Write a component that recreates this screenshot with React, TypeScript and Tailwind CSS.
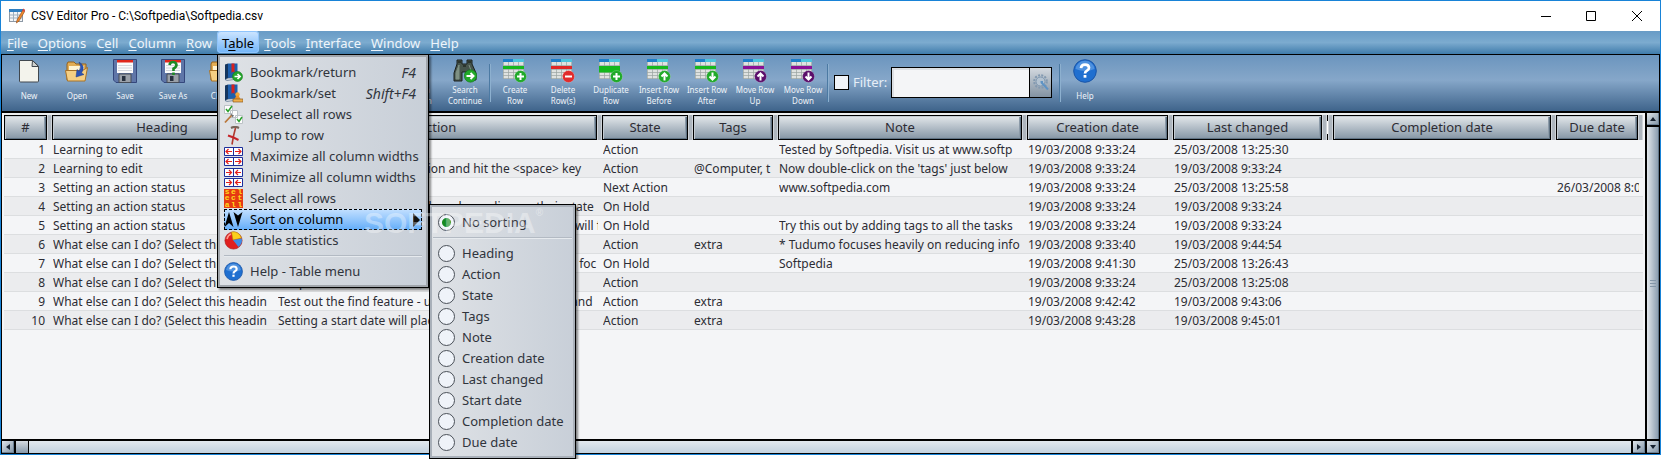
import type { ReactNode } from "react";
import clsx from "clsx";

type Row = {
  heading: string;
  action: string;
  state: string;
  tags: string;
  note: string;
  created: string;
  changed: string;
  due?: string;
};

const selectHeading = "What else can I do? (Select this headin";

const rows: Row[] = [
  { heading: "Learning to edit", action: "Double-click here", state: "Action", tags: "", note: "Tested by Softpedia. Visit us at www.softp", created: "19/03/2008 9:33:24", changed: "25/03/2008 13:25:30" },
  { heading: "Learning to edit", action: "Select the cell with a selection and hit the <space> key", state: "Action", tags: "@Computer, t", note: "Now double-click on the 'tags' just below", created: "19/03/2008 9:33:24", changed: "19/03/2008 9:33:24" },
  { heading: "Setting an action status", action: "Click the state", state: "Next Action", tags: "", note: "www.softpedia.com", created: "19/03/2008 9:33:24", changed: "25/03/2008 13:25:58", due: "26/03/2008 8:0" },
  { heading: "Setting an action status", action: "Action icons will change colour depending on their state", state: "On Hold", tags: "", note: "", created: "19/03/2008 9:33:24", changed: "19/03/2008 9:33:24" },
  { heading: "Setting an action status", action: "Completed actions are hidden from the list, the view will fi", state: "On Hold", tags: "", note: "Try this out by adding tags to all the tasks", created: "19/03/2008 9:33:24", changed: "19/03/2008 9:33:24" },
  { heading: selectHeading, action: "Tag your actions", state: "Action", tags: "extra", note: "* Tudumo focuses heavily on reducing info", created: "19/03/2008 9:33:40", changed: "19/03/2008 9:44:54" },
  { heading: selectHeading, action: "Use the headings on the left of the list to keep things foc", state: "On Hold", tags: "", note: "Softpedia", created: "19/03/2008 9:41:30", changed: "25/03/2008 13:26:43" },
  { heading: selectHeading, action: "Keep notes", state: "Action", tags: "", note: "", created: "19/03/2008 9:33:24", changed: "25/03/2008 13:25:08" },
  { heading: selectHeading, action: "Test out the find feature - use your keyboard to find and", state: "Action", tags: "extra", note: "", created: "19/03/2008 9:42:42", changed: "19/03/2008 9:43:06" },
  { heading: selectHeading, action: "Setting a start date will place it out of the view until t", state: "Action", tags: "extra", note: "", created: "19/03/2008 9:43:28", changed: "19/03/2008 9:45:01" },
];

const columns = [
  { label: "#", width: "w-[48px]" },
  { label: "Heading", width: "w-[225px]" },
  { label: "Action", width: "w-[325px]" },
  { label: "State", width: "w-[91px]" },
  { label: "Tags", width: "w-[85px]" },
  { label: "Note", width: "w-[249px]" },
  { label: "Creation date", width: "w-[146px]" },
  { label: "Last changed", width: "w-[154px]" },
  { label: "", width: "w-[6px]" },
  { label: "Completion date", width: "w-[223px]" },
  { label: "Due date", width: "w-auto" },
];

const menus = [
  { before: "", key: "F", after: "ile" },
  { before: "", key: "O", after: "ptions" },
  { before: "C", key: "e", after: "ll" },
  { before: "", key: "C", after: "olumn" },
  { before: "", key: "R", after: "ow" },
  { before: "T", key: "a", after: "ble" },
  { before: "", key: "T", after: "ools" },
  { before: "", key: "I", after: "nterface" },
  { before: "", key: "W", after: "indow" },
  { before: "", key: "H", after: "elp" },
];

const sortFields = ["Heading", "Action", "State", "Tags", "Note", "Creation date", "Last changed", "Start date", "Completion date", "Due date"];

/* ---------- icons ---------- */

const AppIcon = () => (
  <svg width="16" height="16" viewBox="0 0 16 16" aria-hidden="true">
    <rect x="0.5" y="1.5" width="13" height="12" fill="#f4f6f8" stroke="#8d99a6" />
    <rect x="0" y="1" width="14" height="3" fill="#2f7fc1" />
    <path d="M1 7h12M1 10h12M4.500 4v9M8.500 4v9" stroke="#9fb0bf" fill="none" />
    <path d="M14.500 1 8 12l-.6 3 2.400-1.700L16 3z" fill="#f08a2c" stroke="#8c4a1a" strokeWidth=".6" />
    <path d="m13.300 2.400 1.900 1.500L16 2l-1.500-1.500z" fill="#d64545" />
  </svg>
);

const NewIcon = () => (
  <svg width="24" height="24" viewBox="0 0 24 24" aria-hidden="true">
    <path d="M2.500 1.500h13l6 5.500v15q0 1-1 1h-17q-1 0-1-1z" fill="#f3f3ec" stroke="#40474e" />
    <path d="M15.500 1.500 15 7.500h6.500z" fill="#cfd2cf" stroke="#40474e" strokeLinejoin="round" />
  </svg>
);

const OpenIcon = () => (
  <svg width="24" height="24" viewBox="0 0 24 24" aria-hidden="true">
    <path d="M2 21V5l1-2h6l2 2h10v6" fill="#e2ad55" stroke="#96631c" />
    <path d="M4 7h15v5H4z" fill="#fff4d4" />
    <path d="M.5 11.500h17l5-3-2.500 13.500H2.500z" fill="#f5cf83" stroke="#a87226" />
    <path d="M14 3q7 4 2.500 11l2.500 1.500-8 2.500 1-7.500 2 1.800Q17 8 14 3z" fill="#2b53b4" stroke="#1c3a86" strokeWidth=".5" />
  </svg>
);

const SaveIcon = ({ ask }: { ask?: boolean }) => (
  <svg width="24" height="24" viewBox="0 0 24 24" aria-hidden="true">
    <path d="M.5.500h23v23H3l-2.500-2.500z" fill="#5f76a8" stroke="#34477c" />
    <path d="M4 1h16v13H4z" fill="#fbfbfb" />
    <path d="M4 1h16v2.500H4z" fill="#e0261b" />
    <path d="M5 6.500h14M5 9h14M5 11.500h14" stroke="#c9cdd4" strokeWidth=".8" />
    <path d="M6 15h12v8.500H6z" fill="#9aa0a8" stroke="#464c57" />
    <path d="M9 17h3.500v5H9z" fill="#27303f" />
    {ask && <path d="M8.500 6q.5-3 3.500-3t3.500 3q0 2-3 3.600V12m0 1.500V16" fill="none" stroke="#1c8a24" strokeWidth="2.600" />}
  </svg>
);

const BinocularsIcon = () => (
  <svg width="24" height="24" viewBox="0 0 24 24" aria-hidden="true">
    <path d="M4 1h5v4h5V1h5v4l4 9v7h-8v-8H9v9H1v-8l3-9z" fill="#46544c" stroke="#1b211e" />
    <path d="M3 14l3-8v14H3zM16 6l3 8" fill="#7f9184" stroke="#7f9184" />
    <path d="M5 3h3M15 3h3M10 7h3" stroke="#10140f" />
    <circle cx="17.500" cy="17" r="6.200" fill="#21a92a" stroke="#0e7616" strokeWidth=".6" />
    <path d="M13.500 17h7m-3-3 3 3-3 3" fill="none" stroke="#fff" strokeWidth="2" />
  </svg>
);

type RowIconProps = { bar: string; badge: string; mark: string; double?: boolean };

const RowIcon = ({ bar, badge, mark, double }: RowIconProps) => (
  <svg width="24" height="24" viewBox="0 0 24 24" aria-hidden="true">
    <path d="M0 0h21v20H0z" fill="#dfe2e0" />
    <path d="M.5 3v17M5.500 3v17M10.500 3v17M15.500 3v17M20.500 3v17M0 6.500h21M0 10.500h21M0 13.500h21M0 16.500h21M0 19.500h21" stroke="#9aa3a1" strokeWidth=".7" fill="none" />
    <path d="M0 0h21v3H0z" fill="#1d7ec8" />
    <path d="M10 0h11v3H10z" fill="#4cc3dc" />
    <path d="M0 7h21v3H0z" fill={bar} />
    {double && <path d="M0 10h21v3.500H0z" fill={bar} />}
    <circle cx="17.500" cy="17.500" r="6" fill={badge} stroke="#ffffff" strokeOpacity=".35" strokeWidth=".6" />
    <path d={mark} fill="none" stroke="#fff" strokeWidth="2" />
  </svg>
);

const HelpIcon = ({ size }: { size: number }) => (
  <svg width={size} height={size} viewBox="0 0 24 24" aria-hidden="true">
    <circle cx="12" cy="12" r="11.300" fill="#1f6fd0" stroke="#1a55a8" />
    <path d="M2.500 10a9.600 9.600 0 0 1 19 0q-9 4-19 0z" fill="#6ea8ea" opacity=".6" />
    <path d="M8 9.200q.2-3.500 4-3.500t4 3q0 1.700-2 2.900-2 1.200-2 2.900" fill="none" stroke="#fff" strokeWidth="2.700" />
    <path d="M10.600 16h2.800v2.700h-2.800z" fill="#fff" />
  </svg>
);

const GearIcon = () => (
  <svg width="16" height="17" viewBox="0 0 16 17" aria-hidden="true">
    <circle cx="7.500" cy="7.500" r="6.300" fill="none" stroke="#8299b0" strokeWidth="2" strokeDasharray="2 1.300" />
    <circle cx="7.500" cy="7.500" r="4.500" fill="#b4c3d1" stroke="#7e97b0" />
    <path d="m8 8 7 7.500" stroke="#5f93c4" strokeWidth="2" />
    <path d="M7 7h3v3z" fill="#5f93c4" />
  </svg>
);

const BookIcon = ({ kind }: { kind: "return" | "set" }) => (
  <svg width="19" height="19" viewBox="0 0 19 19" aria-hidden="true">
    <path d="M1 1.500 4 .500v15l-3 1z" fill="#15365f" />
    <path d="M4 .500h9.500v14.500L4 16z" fill="#1d5fae" />
    <path d="M1 16.500 4 15l9.500-.5v1.500L3 17.500z" fill="#d9dde2" stroke="#27496f" strokeWidth=".5" />
    <path d="M7.500.500h3v9.500L9 8.500 7.500 10z" fill="#d8201c" />
    {kind === "return" ? (
      <>
        <circle cx="13.500" cy="13.500" r="5" fill="#23a62c" stroke="#157a1c" strokeWidth=".6" />
        <path d="M10.500 13.500h5.500M13.500 11l2.600 2.500-2.600 2.500" fill="none" stroke="#fff" strokeWidth="1.700" />
      </>
    ) : (
      <>
        <circle cx="13.500" cy="10.500" r="2.200" fill="#f3a73a" />
        <path d="m10.500 15 2-3.500h2l2 3.500z" fill="#e8912a" />
        <path d="M9 15h10v3H9z" fill="#f0b04c" stroke="#8a5a24" strokeWidth=".7" />
      </>
    )}
  </svg>
);

const DeselectIcon = () => (
  <svg width="19" height="19" viewBox="0 0 19 19" aria-hidden="true">
    <path d="M.5.500h8v8h-8zM6.500 5.500h7v7h-7zM11.500 10.500h7v8h-7z" fill="#fdfdfd" stroke="#bcc2c6" />
    <path d="m2 4 2 2.500L8 1M13 14l2 2.500L18 12" fill="none" stroke="#28a02c" strokeWidth="1.500" />
    <path d="m1 17.500 7-7.500" stroke="#b9773a" strokeWidth="1.800" />
    <path d="m6.500 8.500 3.500 2-1.500 2z" fill="#6c7074" />
  </svg>
);

const JumpIcon = () => (
  <svg width="19" height="19" viewBox="0 0 19 19" aria-hidden="true">
    <path d="M7 2q4-2 8 0" fill="none" stroke="#77655a" strokeWidth="2.200" />
    <path d="M11.500 2 9.500 10 8 18.500" fill="none" stroke="#b03a30" strokeWidth="1.600" />
    <path d="m4 9.500 5.500 2 5 2.500" fill="none" stroke="#c5252a" strokeWidth="2" />
  </svg>
);

const WidthIcon = ({ inward }: { inward?: boolean }) => {
  const left = inward ? "M2 4.500h5M5 2l2.500 2.500L5 7" : "M2 4.500h6M4.500 2 2 4.500 4.500 7";
  const right = inward ? "M12 4.500h5M14 2l-2.500 2.500L14 7" : "M11 4.500h6M14.500 2 17 4.500 14.500 7";
  return (
    <svg width="19" height="19" viewBox="0 0 19 19" aria-hidden="true">
      {[0, 10].map((y) => (
        <g key={y} transform={`translate(0 ${y})`} fill="none">
          <path d="M.5.500h18v8H.5z" fill="#fff" stroke="#1d2f9b" />
          <path d="M9.500 0v8" stroke="#1d2f9b" />
          <path d={left} stroke="#e3201c" strokeWidth="1.200" />
          <path d={right} stroke="#e3201c" strokeWidth="1.200" />
        </g>
      ))}
    </svg>
  );
};

const SelectAllIcon = () => (
  <span className="grid h-[19px] w-[19px] grid-cols-3 grid-rows-3 place-items-center bg-[#e63a12] font-['Liberation_Mono',monospace] text-[8px] leading-[6px] font-bold text-[#ffd91f]" aria-hidden="true">
    {"selectall".split("").map((letter, index) => (
      <span key={index}>{letter}</span>
    ))}
  </span>
);

const SortIcon = () => (
  <svg width="19" height="15" viewBox="0 0 19 15" aria-hidden="true">
    <path d="M5 0 9.500 15 5 11 .5 15zM9.500 0 14 3.500 18.500 0 14 15z" fill="#000" />
  </svg>
);

const PieIcon = () => (
  <svg width="19" height="19" viewBox="0 0 19 19" aria-hidden="true">
    <circle cx="9.500" cy="9.500" r="8.600" fill="#e02020" stroke="#a21414" strokeWidth=".6" />
    <path d="M9 9 7.500 1a8.600 8.600 0 0 1 10 6z" fill="#fbcf1d" stroke="#b98e0a" strokeWidth=".5" />
    <path d="m9 9 8.800-1.500q1 5-3.300 8.500z" fill="#3f8ee6" />
    <path d="M3 8q1-4 4-5" stroke="#ff9a8a" strokeWidth="1.500" fill="none" />
  </svg>
);

/* ---------- menus ---------- */

const tableMenu: { label: string; icon: ReactNode; shortcut?: string }[] = [
  { label: "Bookmark/return", icon: <BookIcon kind="return" />, shortcut: "F4" },
  { label: "Bookmark/set", icon: <BookIcon kind="set" />, shortcut: "Shift+F4" },
  { label: "Deselect all rows", icon: <DeselectIcon /> },
  { label: "Jump to row", icon: <JumpIcon /> },
  { label: "Maximize all column widths", icon: <WidthIcon /> },
  { label: "Minimize all column widths", icon: <WidthIcon inward /> },
  { label: "Select all rows", icon: <SelectAllIcon /> },
  { label: "Sort on column", icon: <SortIcon /> },
  { label: "Table statistics", icon: <PieIcon /> },
];

const panel = "absolute border border-black bg-linear-to-r from-[#dfe2e6] to-[#c8cfd8] text-[#30343c] shadow-[2px_2px_2px_rgba(0,0,0,0.45)]";

const Separator = () => <div className="h-[2px] border-t border-[#b3bac3] bg-[#e6eaee]" />;

const SortOption = ({ label, checked }: { label: string; checked?: boolean }) => (
  <label className="flex h-[21px] items-center gap-[7px] pl-[5px]">
    <input
      type="radio"
      name="sort"
      defaultChecked={checked}
      className="h-[17px] w-[17px] appearance-none rounded-full border border-[#4a5058] bg-[#eff3f9] checked:bg-[radial-gradient(circle,#178a20_4px,#eff3f9_5px)]"
    />
    {label}
  </label>
);

const SortMenu = () => (
  <div className={clsx(panel, "top-[149px] left-[211px] w-[147px]")}>
    <div className="border-2 border-[#a9b0b9] px-px pt-[5px] pb-[3px]">
      <SortOption label="No sorting" checked />
      <div className="py-[4px]">
        <Separator />
      </div>
      {sortFields.map((field) => (
        <SortOption key={field} label={field} />
      ))}
    </div>
  </div>
);

const TableMenu = () => (
  <div className={clsx(panel, "top-[23px] left-0 z-10 w-[212px]")} role="menu">
    <div className="border-2 border-[#a0a5ab] px-[4px] pt-[5px] pb-[3px]">
      {tableMenu.map(({ label, icon, shortcut }) => (
        <button
          key={label}
          type="button"
          role="menuitem"
          className={clsx(
            "flex h-[21px] w-full items-center whitespace-nowrap",
            label === "Sort on column" && "bg-linear-to-b from-[#c3e0ff] to-[#62adf8] text-black outline-1 -outline-offset-1 outline-black outline-dashed",
          )}
        >
          <span className="w-[26px] shrink-0">{icon}</span>
          <span>{label}</span>
          {shortcut && <span className="ml-auto pr-[6px] text-[14px] italic">{shortcut}</span>}
          {label === "Sort on column" && (
            <svg className="ml-auto" width="9" height="14" viewBox="0 0 9 14" aria-hidden="true">
              <path d="m0 0 7 7-7 7z" fill="#111" />
            </svg>
          )}
        </button>
      ))}
      <div className="py-[4px]">
        <Separator />
      </div>
      <button type="button" role="menuitem" className="flex h-[21px] w-full items-center">
        <span className="w-[26px]">
          <HelpIcon size={19} />
        </span>
        Help - Table menu
      </button>
    </div>
    <SortMenu />
    <div className="pointer-events-none absolute top-[150px] left-[146px] flex font-['Liberation_Sans',sans-serif] text-[30px] leading-[36px] font-bold text-white/35">
      SOFTPEDIA<span className="text-[10px] leading-[16px]">®</span>
    </div>
  </div>
);

/* ---------- window parts ---------- */

const TitleBar = () => (
  <header className="flex h-[30px] items-center bg-white pl-2 font-['Roboto','Open_Sans',sans-serif] text-[12px] text-black">
    <AppIcon />
    <h1 className="ml-[6px]">CSV Editor Pro - C:\Softpedia\Softpedia.csv</h1>
    <div className="ml-auto flex">
      <button type="button" aria-label="Minimize" className="flex h-[29px] w-[45px] items-center justify-center">
        <svg width="10" height="10" viewBox="0 0 10 10"><path d="M0 5.500h10" stroke="#000" /></svg>
      </button>
      <button type="button" aria-label="Maximize" className="flex h-[29px] w-[45px] items-center justify-center">
        <svg width="10" height="10" viewBox="0 0 10 10"><path d="M.5.500h9v9h-9z" fill="none" stroke="#000" /></svg>
      </button>
      <button type="button" aria-label="Close" className="flex h-[29px] w-[47px] items-center justify-center">
        <svg width="10" height="10" viewBox="0 0 10 10"><path d="m0 0 10 10M10 0 0 10" stroke="#000" /></svg>
      </button>
    </div>
  </header>
);

const MenuBar = () => (
  <nav className="flex h-[23px] bg-linear-to-b from-[#689bc6] via-[#7cabcf] to-[#3f7cab] pl-px text-[13px] text-[#eef5fb]">
    {menus.map(({ before, key, after }) => {
      const open = before + key + after === "Table";
      return (
        <div key={before + key + after} className="relative">
          <button
            type="button"
            className={clsx(
              "h-[22px] px-[5px] pt-[3px]",
              open && "rounded-sm bg-linear-to-b from-[#cfe6ff] to-[#6fb4f8] text-black inset-ring inset-ring-[#8fc4fb]",
            )}
          >
            {before}
            <span className="underline underline-offset-2">{key}</span>
            {after}
          </button>
          {open && <TableMenu />}
        </div>
      );
    })}
  </nav>
);

const Tool = ({ icon, label }: { icon: ReactNode; label: string }) => (
  <button type="button" className="flex h-[52px] w-[48px] shrink-0 flex-col items-center gap-px text-[8px] leading-[11px] text-[#eef3f8]">
    {icon}
    <span className="flex h-[22px] items-center text-center whitespace-pre-line">{label}</span>
  </button>
);

const ToolDivider = () => <div className="mt-[5px] h-[38px] w-[2px] shrink-0 border-l border-[#4c7aa3] bg-[#8db0cf]" />;

const green = "#21a92a";
const purple = "#5b0f6b";
const plus = "M17.500 14v7M14 17.500h7";
const up = "M17.500 21.500v-7m-3 3 3-3 3 3";
const down = "M17.500 13.500v7m-3-3 3 3 3-3";

const Toolbar = () => (
  <div className="flex h-[56px] items-start bg-linear-to-b from-[#6b95be] via-[#86a7c9] via-45% to-[#3f648b] pt-[4px] pl-[3px]">
    <Tool icon={<NewIcon />} label="New" />
    <Tool icon={<OpenIcon />} label="Open" />
    <Tool icon={<SaveIcon />} label="Save" />
    <Tool icon={<SaveIcon ask />} label="Save As" />
    <Tool icon={<OpenIcon />} label="Close" />
    <div className="w-[148px] shrink-0" />
    <Tool icon={<BinocularsIcon />} label={"Search\nColumn"} />
    <Tool icon={<BinocularsIcon />} label={"Search\nContinue"} />
    <ToolDivider />
    <Tool icon={<RowIcon bar="#14b81c" badge={green} mark={plus} />} label={"Create\nRow"} />
    <Tool icon={<RowIcon bar="#e02626" badge="#e12b2b" mark="M14 17.500h7" />} label={"Delete\nRow(s)"} />
    <Tool icon={<RowIcon bar="#14b81c" badge={green} mark={plus} double />} label={"Duplicate\nRow"} />
    <Tool icon={<RowIcon bar="#14b81c" badge={green} mark={up} />} label={"Insert Row\nBefore"} />
    <Tool icon={<RowIcon bar="#14b81c" badge={green} mark={down} />} label={"Insert Row\nAfter"} />
    <Tool icon={<RowIcon bar="#8a0f96" badge={purple} mark={up} />} label={"Move Row\nUp"} />
    <Tool icon={<RowIcon bar="#8a0f96" badge={purple} mark={down} />} label={"Move Row\nDown"} />
    <ToolDivider />
    <div className="mr-[7px] ml-[5px] mt-[8px] flex h-[31px] shrink-0 items-center text-[13px] text-[#e6eef7]">
      <input id="use-filter" type="checkbox" className="h-[15px] w-[15px] appearance-none border border-black bg-[#f0f4f9]" />
      <label htmlFor="use-filter" className="w-[42px] pl-1">Filter:</label>
      <input type="text" aria-label="Filter text" className="h-[31px] w-[139px] border border-black bg-[#f4f5f7] shadow-[inset_2px_2px_0_#dde0e4]" />
      <button type="button" aria-label="Filter options" className="flex h-[31px] w-[22px] items-center justify-center border border-l-0 border-black bg-linear-to-b from-[#d3d9df] to-[#8393a3]">
        <GearIcon />
      </button>
    </div>
    <ToolDivider />
    <Tool icon={<HelpIcon size={24} />} label="Help" />
  </div>
);

const GridHeader = ({ label }: { label: string }) => (
  <div className="flex h-[25px]">
    {label ? (
      <button type="button" className="min-w-0 flex-1 border border-black bg-linear-to-b from-[#e4e8eb] to-[#8596a5] pb-[2px] text-center font-normal shadow-[inset_1px_1px_0_#c3cbd2,inset_-1px_-1px_0_#5f7283,inset_-2px_-2px_0_#8b9aa8]">
        {label}
      </button>
    ) : (
      <span className="w-px border-y-[6px] border-black bg-white" />
    )}
    <span className="w-[5px] shrink-0 border-x border-[#cfd4d9] bg-[#aeb6be]" />
  </div>
);

const DataTable = () => (
  <table className="w-full table-fixed border-separate border-spacing-0 text-[12px] leading-[16px] text-[#2c2c34]">
    <colgroup>
      {columns.map(({ label, width }) => (
        <col key={label} className={width} />
      ))}
    </colgroup>
    <thead>
      <tr className="bg-[#eceeef] text-[13px]">
        {columns.map(({ label }) => (
          <th key={label} className="p-0 pt-[2px] font-normal">
            <GridHeader label={label} />
          </th>
        ))}
      </tr>
    </thead>
    <tbody>
      {rows.map((row, index) => (
        <tr key={index} className="odd:bg-[#f4f5f7] even:bg-[#ebecee]">
          <td className="border-b border-[#dcdee0] p-0 pt-[2px] pr-[7px] text-right">{index + 1}</td>
          {[row.heading, row.action, row.state, row.tags, row.note, row.created, row.changed, "", "", row.due].map((value, cell) => (
            <td key={cell} className="border-b border-[#dcdee0] p-0 pt-[2px] pr-[4px] pl-px">
              <div className="overflow-hidden whitespace-nowrap">{value}</div>
            </td>
          ))}
        </tr>
      ))}
    </tbody>
  </table>
);

const arrowPaths = {
  up: "M0 5h6L3 1z",
  down: "M0 1h6L3 5z",
  left: "M5 0v6L1 3z",
  right: "M1 0v6l4-3z",
};

const ScrollButton = ({ direction }: { direction: keyof typeof arrowPaths }) => (
  <button
    type="button"
    aria-label={`Scroll ${direction}`}
    className="flex h-[12px] w-[12px] shrink-0 items-center justify-center bg-linear-to-br from-[#dfe5ea] to-[#7f92a4] shadow-[inset_-1px_-1px_0_#6c8093]"
  >
    <svg width="6" height="6" viewBox="0 0 6 6" aria-hidden="true">
      <path d={arrowPaths[direction]} fill="#15202e" />
    </svg>
  </button>
);

export default function App() {
  return (
    <div className="h-screen overflow-hidden bg-white pb-1 font-['Noto_Sans','Open_Sans',sans-serif]">
      <div className="flex h-full flex-col border border-[#1883d7] bg-black">
        <TitleBar />
        <MenuBar />
        <main className="flex min-h-0 flex-1 flex-col border border-black">
          <Toolbar />
          <div className="mt-[2px] flex min-h-0 flex-1">
            <div className="min-w-0 flex-1 overflow-hidden bg-[#f4f5f7] pr-[2px] pl-[2px]">
              <DataTable />
            </div>
            <div className="ml-[2px] flex w-[12px] flex-col">
              <ScrollButton direction="up" />
              <div className="mt-[2px] flex flex-1 flex-col items-center justify-center gap-[2px] bg-linear-to-r from-[#e3e8ec] to-[#8598ab] shadow-[inset_-1px_0_0_#5f7487]">
                <span className="h-px w-[6px] bg-[#8496a8]" />
                <span className="h-px w-[6px] bg-[#8496a8]" />
                <span className="h-px w-[6px] bg-[#8496a8]" />
              </div>
            </div>
          </div>
          <div className="mt-[2px] flex h-[12px]">
            <ScrollButton direction="left" />
            <div className="ml-[2px] w-[12px] bg-linear-to-b from-[#d5dbe1] to-[#8799aa]" />
            <div className="ml-px flex-1 bg-linear-to-b from-[#e2e9ef] to-[#c3d2df]" />
            <div className="ml-[2px]">
              <ScrollButton direction="right" />
            </div>
            <div className="ml-[2px]">
              <ScrollButton direction="down" />
            </div>
          </div>
        </main>
      </div>
    </div>
  );
}
